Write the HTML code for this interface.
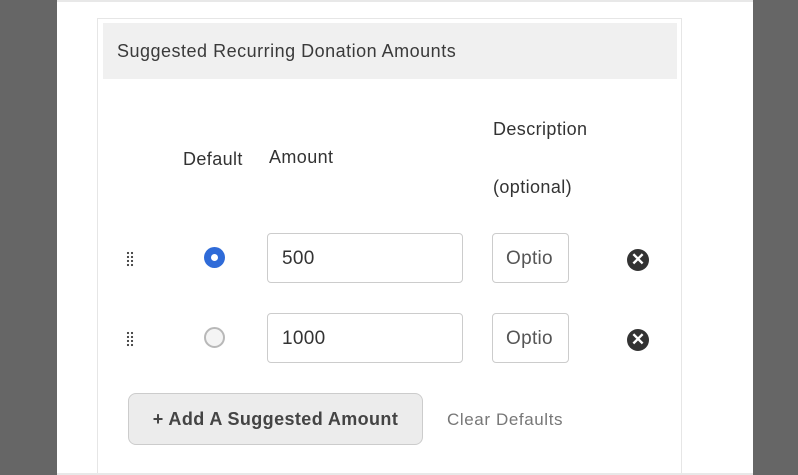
<!DOCTYPE html>
<html><head><style>
*{margin:0;padding:0;box-sizing:border-box}
html,body{width:798px;height:475px;overflow:hidden}
body{background:#666;font-family:"Liberation Sans",sans-serif;position:relative;color:#333}
.page{position:absolute;left:57px;top:0;width:696px;height:475px;background:#fff;border-top:2px solid #e8e8e8}
.box{position:absolute;left:97px;top:18px;width:585px;height:457px;border:1px solid #e6e6e6;border-bottom:none;background:#fff}
.hdr{position:absolute;left:103px;top:23px;width:574px;height:56px;background:#f0f0f0;font-size:18px;letter-spacing:0.5px;line-height:56px;padding-left:14px;color:#3a3a3a}
.t{position:absolute;font-size:18px;letter-spacing:0.4px;color:#333}
.inp{position:absolute;border:1px solid #ccc;border-radius:4px;height:50px;font-size:19px;letter-spacing:0.3px;line-height:50px;padding-left:14px;color:#333;background:#fff}
.grip{position:absolute;width:8px;height:16px;background-image:radial-gradient(circle,#444 1px,transparent 1.3px);background-size:4px 4px}
.x{position:absolute;width:22px;height:22px;border-radius:50%;background:#333;color:#fff;font-size:17px;font-weight:bold;text-align:center;line-height:22px}
.bottom{position:absolute;left:57px;top:473px;width:696px;height:2px;background:#e8e8e8}
</style></head><body>
<div class="page"></div>
<div class="box"></div>
<div class="hdr">Suggested Recurring Donation Amounts</div>
<div class="t" style="left:183px;top:149px">Default</div>
<div class="t" style="left:269px;top:147px">Amount</div>
<div class="t" style="left:493px;top:119px">Description</div>
<div class="t" style="left:493px;top:177px">(optional)</div>

<div class="grip" style="left:126px;top:251px"></div>
<div style="position:absolute;left:204px;top:247px;width:21px;height:21px;border-radius:50%;background:#2f6bd8"><div style="position:absolute;left:7px;top:7px;width:7px;height:7px;border-radius:50%;background:#fff"></div></div>
<div class="inp" style="left:267px;top:233px;width:196px">500</div>
<div class="inp" style="left:492px;top:233px;width:77px;color:#555;padding-left:13px">Optio</div>
<div class="x" style="left:627px;top:249px">✕</div>

<div class="grip" style="left:126px;top:331px"></div>
<div style="position:absolute;left:204px;top:327px;width:21px;height:21px;border-radius:50%;background:#f4f4f4;border:2px solid #b8b8b8"></div>
<div class="inp" style="left:267px;top:313px;width:196px">1000</div>
<div class="inp" style="left:492px;top:313px;width:77px;color:#555;padding-left:13px">Optio</div>
<div class="x" style="left:627px;top:329px">✕</div>

<div style="position:absolute;left:128px;top:393px;width:295px;height:52px;background:#ececec;border:1px solid #ccc;border-radius:8px;font-size:18px;letter-spacing:0.4px;font-weight:bold;color:#444;text-align:center;line-height:50px">+ Add A Suggested Amount</div>
<div class="t" style="left:447px;top:410px;color:#777;font-size:17px;letter-spacing:0.6px">Clear Defaults</div>
<div class="bottom"></div>
</body></html>
